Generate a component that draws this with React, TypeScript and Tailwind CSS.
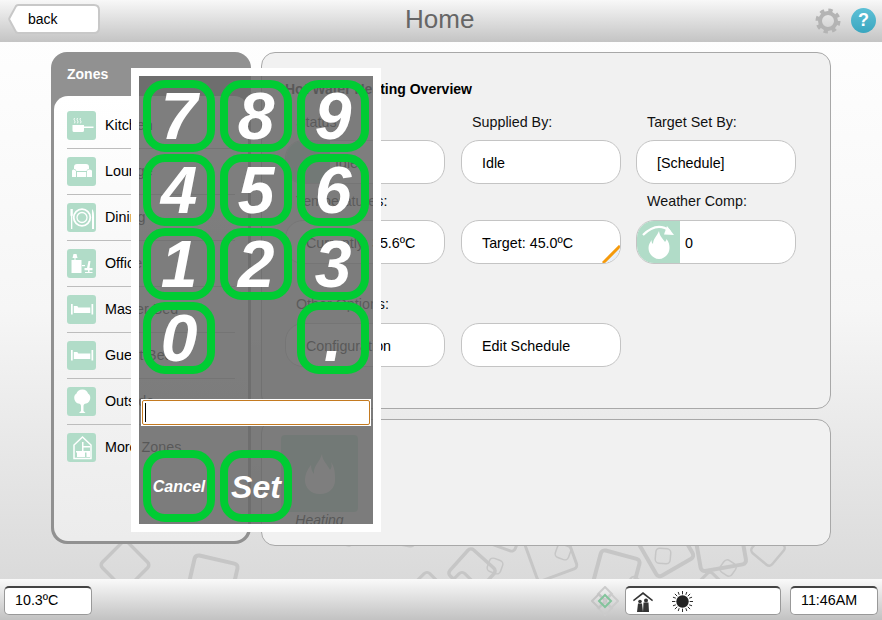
import React from "react";

const font = { fontFamily: '"Liberation Sans", Arial, sans-serif' };

function Tile({ children }: { children: React.ReactNode }) {
  return (
    <div className="w-[29px] h-[29px] rounded-[3px] bg-[#b1dcc8] flex items-center justify-center shrink-0">
      <svg width="29" height="29" viewBox="0 0 29 29" fill="#fff">{children}</svg>
    </div>
  );
}

const Bed = (
  <>
    <rect x="4" y="9" width="1.700" height="10.500" />
    <rect x="24.500" y="9" width="1.700" height="10.500" />
    <path d="M6.800 11h3.500l1 1.500h12V18H6.800z" />
  </>
);

const zones: { name: string; icon: React.ReactNode }[] = [
  {
    name: "Kitchen",
    icon: (
      <>
        <path d="M5.500 14h11.500v1.500h9.500v1.500H17v2.500a1.500 1.500 0 0 1-1.500 1.500H7a1.500 1.500 0 0 1-1.500-1.500z" />
        <path d="M7.500 7q-1 1.300 0 2.500t0 2.800M10.500 7q-1 1.300 0 2.500t0 2.800M13.500 7q-1 1.300 0 2.500t0 2.800" fill="none" stroke="#fff" strokeWidth="0.900" />
      </>
    ),
  },
  {
    name: "Lounge",
    icon: (
      <>
        <path d="M7 10q0-3 3-3h9q3 0 3 3v2q-2 0-2.500 2H9.500Q9 12 7 12z" />
        <path d="M5 14q0-1.500 1.500-1.500T9 14v6H5zM20 14q0-1.500 2.500-1.500T25 14v6h-5zM10 15h9.200v5H10z" />
      </>
    ),
  },
  {
    name: "Dining",
    icon: (
      <>
        <circle cx="15" cy="14.500" r="8.300" fill="none" stroke="#fff" strokeWidth="1.800" />
        <circle cx="15" cy="14.500" r="5" fill="none" stroke="#fff" strokeWidth="1.300" />
        <path d="M3.500 6h2.300v6.500l-.5 1V26h-1.300V13.500l-.5-1z" />
        <path d="M25 6q2 2 2 7v13h-2z" />
      </>
    ),
  },
  {
    name: "Office",
    icon: (
      <>
        <path d="M6.500 5h3l1 4h-5zM7.500 9h1v2h-1z" />
        <path d="M4.500 11h10v13h-10z" />
        <path d="M21.500 12h2l-1 7h3v2.200h-3v1.800h3v1h-7.500v-1h3v-1.800H17.500V19H20z" />
        <path d="M15 16h3v1.200h-3z" />
      </>
    ),
  },
  { name: "Master Bed", icon: Bed },
  { name: "Guest Bed", icon: Bed },
  {
    name: "Outside",
    icon: <path d="M15.500 2.500c3 0 5 2 5.500 4 2 1 2.500 3 2.200 5-.2 2.500-2.200 5-5.200 5.200-.7.100-1.500 1.300-1.500 2.300V24l2 2h-6.500l2-2v-5c0-1-.8-2.200-1.500-2.300-3-.2-5-2.700-5.200-5.200-.3-2 .2-4 2.200-5 .5-2 2.500-4 6-4z" />,
  },
  {
    name: "More Zones",
    icon: (
      <>
        <path d="M15.500 4 24 12v13.500H7V12z" fill="none" stroke="#fff" strokeWidth="1.500" />
        <path d="M9 18h14v1.500H9zM15 9v9h1.500V9zM10 19.500h8v4.500h-8zM19.500 19.500H23v4.500h-3.500zM16.500 13H23v1.500h-6.500z" />
      </>
    ),
  },
];

function ValueBox({ children, className = "pl-[20px]" }: { children?: React.ReactNode; className?: string }) {
  return (
    <div className={`relative w-[160px] h-[44px] rounded-[18px] border border-[#c4c4c4] bg-white flex items-center pt-[4px] text-[14.3px] text-black overflow-hidden ${className}`}>
      {children}
    </div>
  );
}

function Label({ children }: { children: React.ReactNode }) {
  return <div className="h-[19px] pl-[11px] text-[14.3px] leading-[19px] text-[#111]">{children}</div>;
}

function PadButton({ label, size }: { label: string; size: string }) {
  return (
    <button className={`w-[72px] h-[72px] rounded-[22px] border-[8px] border-[#00cc33] flex items-center justify-center text-white font-bold italic ${size}`}>
      {label}
    </button>
  );
}

function Squares() {
  // cx, cy, size, rotation, stroke
  const items = [
    [125, 565, 36, 45, 3.500],
    [212, 581, 44, 13, 4],
    [345, 536, 18, 12, 1.500],
    [405, 534, 22, 10, 3],
    [427, 592, 30, 45, 3],
    [462, 592, 30, 45, 3],
    [472, 572, 35, 42, 3.500],
    [495, 566, 14, 20, 1.500],
    [505, 533, 30, 20, 3],
    [551, 555, 42, -20, 3],
    [563, 552, 14, 20, 1.500],
    [616, 574, 40, 15, 4],
    [666, 549, 42, -30, 4],
    [663, 556, 15, 5, 1.500],
    [720, 545, 46, -10, 4],
    [710, 592, 30, 45, 3],
    [728, 568, 14, 35, 1.500],
    [768, 549, 26, 40, 2.500],
    [635, 592, 24, 40, 2],
  ];
  return (
    <svg className="absolute left-0 top-0" width="882" height="620" fill="none" stroke="#c6c6c6">
      {items.map(([cx, cy, s, r, w], i) => (
        <rect key={i} x={cx - s / 2} y={cy - s / 2} width={s} height={s} rx="4" strokeWidth={w} transform={`rotate(${r} ${cx} ${cy})`} />
      ))}
    </svg>
  );
}

export default function App() {
  const rows = [
    ["7", "8", "9"],
    ["4", "5", "6"],
    ["1", "2", "3"],
  ];
  return (
    <div style={font} className="relative w-[882px] h-[620px] overflow-hidden flex flex-col bg-gradient-to-b from-white via-[#f6f6f6] to-[#d6d6d6]">
      <Squares />
      {/* Header */}
      <header className="relative h-[42px] shrink-0 bg-gradient-to-b from-[#f8f8f8] to-[#c4c4c4] flex items-center justify-between pl-[8px] pr-[6px]">
        <div className="relative mb-[4px] w-[92px] h-[30px] flex items-center pl-[20px] text-[14px] text-black">
          <svg className="absolute left-0 top-0" width="92" height="30" viewBox="0 0 92 30">
            <path d="M10.500 1H86Q91 1 91 6V24Q91 29 86 29H10.500Q9 29 8 28L1.500 16Q1 15 1.500 14L8 2Q9 1 10.500 1Z" fill="#fff" stroke="#c8c8c8" strokeWidth="2" />
          </svg>
          <span className="relative">back</span>
        </div>
        <div className="absolute left-[405px] top-[3px] text-[26px] leading-[32px] text-[#666]">Home</div>
        <div className="flex items-center gap-[10px] mb-[1px]">
          <svg width="26" height="26" viewBox="0 0 26 26" fill="none">
            <circle cx="13" cy="13" r="8" stroke="#b4b4b4" strokeWidth="4" />
            <circle cx="13" cy="13" r="10.500" stroke="#b4b4b4" strokeWidth="4" strokeDasharray="4.200 4.050" />
          </svg>
          <div className="w-[25px] h-[25px] rounded-full bg-gradient-to-b from-[#5cc0d6] to-[#3aa6bf] flex items-center justify-center text-white font-bold text-[18px]">?</div>
        </div>
      </header>

      {/* Body */}
      <main className="relative flex-1 flex gap-[10px] pt-[10px] pl-[51px]">
        <section className="w-[200px] h-[492px] rounded-[16px] bg-[#919191] p-[3px] pt-0 flex flex-col">
          <div className="h-[44px] shrink-0 pl-[13px] pt-[13px] text-[14px] leading-[18px] font-bold text-white">Zones</div>
          <div className="flex-1 rounded-[14px] bg-gradient-to-b from-white to-[#ececec] pt-[7px] px-[13px]">
            {zones.map((z, i) => (
              <div key={z.name} className={`h-[46px] flex items-center gap-[9px] border-b ${i < 7 ? "border-[#bdbdbd]" : "border-transparent"}`}>
                <Tile>{z.icon}</Tile>
                <span className="text-[14.3px] text-black">{z.name}</span>
              </div>
            ))}
          </div>
        </section>

        <div className="w-[570px] flex flex-col gap-[10px]">
          <section className="h-[357px] rounded-[14px] border border-[#a8a8a8] bg-[#f1f1f1] pl-[23px] pt-[27px]">
            <h2 className="text-[14px] leading-[18px] font-bold text-black">Hot Water Heating Overview</h2>
            <div className="grid grid-cols-[176px_175px_160px] mt-[15px]">
              <div className="flex flex-col gap-[8px]">
                <Label>Status:</Label>
                <ValueBox className="pl-[49px]">
                  <div className="absolute left-0 top-0 bottom-0 w-[44px] bg-[#b1dcc8]" />
                  <span className="relative">Idle</span>
                </ValueBox>
              </div>
              <div className="flex flex-col gap-[8px]">
                <Label>Supplied By:</Label>
                <ValueBox>Idle</ValueBox>
              </div>
              <div className="flex flex-col gap-[8px]">
                <Label>Target Set By:</Label>
                <ValueBox>[Schedule]</ValueBox>
              </div>
              <div className="flex flex-col gap-[9px] mt-[8px]">
                <Label>Temperatures:</Label>
                <ValueBox>Currently: 35.6ºC</ValueBox>
              </div>
              <div className="flex flex-col gap-[9px] mt-[8px]">
                <div className="h-[19px]" />
                <ValueBox>
                  Target: 45.0ºC
                  <svg className="absolute right-0 bottom-0" width="18" height="18" viewBox="0 0 18 18">
                    <path d="M18 0 0 18V18H18Z" fill="#e8f0fa" />
                    <path d="M18 1 1 18" stroke="#f59a0c" strokeWidth="3" />
                  </svg>
                </ValueBox>
              </div>
              <div className="flex flex-col gap-[9px] mt-[8px]">
                <Label>Weather Comp:</Label>
                <ValueBox className="pl-[48px]">
                  <div className="absolute left-0 top-0 bottom-0 w-[43px] bg-[#b1dcc8] flex items-center justify-center">
                    <svg width="43" height="42" viewBox="0 0 43 42" fill="#fff">
                      <path d="M6 14Q20 0 33 10" fill="none" stroke="#fff" strokeWidth="2.200" />
                      <path d="M30 5l7 9-10-.5z" />
                      <path d="M22 10c.5 5 4 8 6 11 1-1 1.500-2 1.500-3 2.500 3 3 6 3 9 0 6-5 11-10.500 11S11.500 33 11.500 27c0-3 1.500-5.500 3-8 0 2 .5 3 1.500 4 0-5 4-8 6-13z" />
                    </svg>
                  </div>
                  <span className="relative">0</span>
                </ValueBox>
              </div>
              <div className="flex flex-col gap-[9px] mt-[31px]">
                <Label>Other Options:</Label>
                <ValueBox>Configuration</ValueBox>
              </div>
              <div className="flex flex-col gap-[9px] mt-[31px]">
                <div className="h-[19px]" />
                <ValueBox>Edit Schedule</ValueBox>
              </div>
            </div>
          </section>
          <section className="h-[127px] rounded-[14px] border border-[#a8a8a8] bg-[#f1f1f1] pl-[19px] pt-[15px]">
            <div className="w-[77px] h-[77px] rounded-[4px] bg-[#b1dcc8] flex items-center justify-center">
              <svg width="30" height="40" viewBox="0 0 30 40" fill="#fff">
                <path d="M17 0C17 7 23 11 25 16 27 14 27 11 26 8 30 14 30 20 30 26 30 34 24 40 15 40 6 40 0 34 0 26 0 21 2 16 6 11 6 15 7 18 9 20 8 12 15 8 17 0Z" />
              </svg>
            </div>
            <div className="w-[77px] text-center italic text-[14px] leading-[16px] text-black">Heating</div>
          </section>
        </div>
      </main>

      {/* Footer */}
      <footer className="relative h-[41px] shrink-0 bg-gradient-to-b from-[#fafafa] to-[#c2c2c2] flex items-center pl-[4px] pr-[4px] pt-[2px]">
        <div className="w-[88px] h-[29px] rounded-[5px] bg-white border border-[#999] border-t-2 border-t-[#444] flex items-center pl-[10px] text-[14.3px] text-black">10.3ºC</div>
        <div className="ml-auto mr-[6px]">
          <svg width="28" height="30" viewBox="0 0 28 30" fill="none" strokeWidth="2">
            <path d="M14 1 21 8 14 15 7 8z" stroke="#cbcbcb" />
            <path d="M14 15 21 22 14 29 7 22z" stroke="#cbcbcb" />
            <path d="M8 8 15 15 8 22 1 15z" stroke="#c4c4c4" />
            <path d="M20 8 27 15 20 22 13 15z" stroke="#cbcbcb" />
            <path d="M14 9 20 15 14 21 8 15z" stroke="#83c49c" />
          </svg>
        </div>
        <div className="w-[156px] h-[29px] rounded-[5px] bg-white border border-[#999] border-t-2 border-t-[#444] flex items-center pl-[7px] gap-[19px]">
          <svg width="20" height="21" viewBox="0 0 20 21" fill="#333" className="mt-[3px]">
            <path d="M10 0 20 8l-.8 1.300L10 2.200 .8 9.300 0 8z" />
            <circle cx="7" cy="9.500" r="1.800" />
            <circle cx="13" cy="8.500" r="2" />
            <path d="M4 20l1-8.500h4l1 8.500zM10 20l.5-9.500h5l.5 9.500z" />
          </svg>
          <svg width="21" height="21" viewBox="0 0 22 22" fill="#222">
            <circle cx="11" cy="11" r="6.500" />
            <path d="M11 0v3.500M11 18.500V22M0 11h3.500M18.500 11H22M3 3l2.500 2.500M16.500 16.500 19 19M19 3l-2.500 2.500M5.500 16.500 3 19M6.500 1l1 3M14.500 18l1 3M15.500 1l-1 3M7.500 18l-1 3M1 6.500l3 1M18 14.500l3 1M21 6.500l-3 1M4 14.500l-3 1" stroke="#222" strokeWidth="1" />
          </svg>
        </div>
        <div className="ml-[9px] w-[88px] h-[29px] rounded-[5px] bg-white border border-[#999] border-t-2 border-t-[#444] flex items-center pl-[10px] text-[14.3px] text-black">11:46AM</div>
      </footer>

      {/* Keypad overlay */}
      <div className="absolute left-[131px] top-[68px] w-[250px] h-[464px] border-[8px] border-white bg-[#676767]/85 pt-[4px] px-[4px]">
        <div className="flex flex-col gap-[2px]">
          {rows.map((r) => (
            <div key={r[0]} className="flex gap-[5px]">
              {r.map((d) => (
                <PadButton key={d} label={d} size="text-[66px]" />
              ))}
            </div>
          ))}
          <div className="flex gap-[82px]">
            <PadButton label="0" size="text-[66px]" />
            <PadButton label="." size="text-[66px]" />
          </div>
        </div>
        <div className="mt-[25px] -mx-[2px] w-[230px] h-[27px] bg-white p-[1px]">
          <div className="h-full rounded-[2px] border border-[#c47a20] flex items-center pl-[2px]">
            <div className="w-px h-[19px] bg-black" />
          </div>
        </div>
        <div className="mt-[24px] flex gap-[5px]">
          <PadButton label="Cancel" size="text-[16px] pt-[1px]" />
          <PadButton label="Set" size="text-[32px] pt-[1px]" />
        </div>
      </div>
    </div>
  );
}
